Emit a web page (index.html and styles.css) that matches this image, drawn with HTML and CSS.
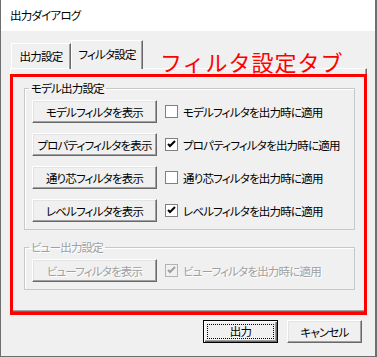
FILE: index.html
```html
<!DOCTYPE html>
<html lang="ja">
<head>
    <meta charset="UTF-8">
    <title>出力ダイアログ</title>
    <link rel="stylesheet" href="styles.css">
</head>
<body>
<div class="window">
    <div class="titlebar">出力ダイアログ</div>

    <div class="client">
        <!-- タブ -->
        <div class="tabrow">
            <div class="tab">出力設定</div>
            <div class="tab active">フィルタ設定</div>
            <div class="note">フィルタ設定タブ</div>
        </div>

        <div class="panel">
            <fieldset class="group">
                <legend>モデル出力設定</legend>
                <div class="row">
                    <button class="btn">モデルフィルタを表示</button>
                    <label class="check"><span class="box"></span>モデルフィルタを出力時に適用</label>
                </div>
                <div class="row">
                    <button class="btn">プロパティフィルタを表示</button>
                    <label class="check"><span class="box"><svg width="11" height="11" viewBox="0 0 11 11"><path d="M2 5 L4 7 L9 2" fill="none" stroke="#000" stroke-width="2"/></svg></span>プロパティフィルタを出力時に適用</label>
                </div>
                <div class="row">
                    <button class="btn">通り芯フィルタを表示</button>
                    <label class="check"><span class="box"></span>通り芯フィルタを出力時に適用</label>
                </div>
                <div class="row">
                    <button class="btn">レベルフィルタを表示</button>
                    <label class="check"><span class="box"><svg width="11" height="11" viewBox="0 0 11 11"><path d="M2 5 L4 7 L9 2" fill="none" stroke="#000" stroke-width="2"/></svg></span>レベルフィルタを出力時に適用</label>
                </div>
            </fieldset>

            <fieldset class="group disabled">
                <legend>ビュー出力設定</legend>
                <div class="row">
                    <button class="btn" disabled>ビューフィルタを表示</button>
                    <label class="check"><span class="box"><svg width="11" height="11" viewBox="0 0 11 11"><path d="M2 5 L4 7 L9 2" fill="none" stroke="#a0a0a0" stroke-width="2"/></svg></span>ビューフィルタを出力時に適用</label>
                </div>
            </fieldset>

            <!-- 注釈の赤枠 -->
            <div class="highlight"></div>
        </div>

        <div class="actions">
            <button class="btn default"><span>出力</span></button>
            <button class="btn">キャンセル</button>
        </div>
    </div>
</div>
</body>
</html>
```

FILE: styles.css
```css
* {
    box-sizing: border-box;
}

html, body {
    margin: 0;
}

body {
    width: 377px;
    height: 357px;
    font-family: "Noto Sans CJK JP", sans-serif;
    font-size: 11.5px;
    font-feature-settings: "palt";
    letter-spacing: -0.8px;
    white-space: nowrap;
    color: #000;
    background: #3c3c3c;
}

.window {
    width: 377px;
    height: 357px;
    border-left: 1px solid #6e6e6e;
    border-right: 2px solid #6e6e6e;
    border-bottom: 1px solid #6e6e6e;
    background: #f0f0f0;
}

.titlebar {
    height: 31px;
    line-height: 31px;
    padding-left: 9px;
    background: #fff;
}

.client {
    padding: 9px 8px 0 9px;
}

/* タブ */
.tabrow {
    display: flex;
    align-items: flex-end;
    height: 29px;
    margin-bottom: -1px;
    position: relative;
    z-index: 1;
}

.tab {
    width: 60px;
    height: 26px;
    margin-left: 1px;
    line-height: 24px;
    text-align: center;
    border: 1px solid;
    border-color: #fff #696969 transparent #fff;
    border-bottom: none;
    box-shadow: inset -1px 0 #a0a0a0;
}

.tab.active {
    width: 72px;
    height: 29px;
    margin-left: 0;
    line-height: 26px;
    background: #f0f0f0;
}

.note {
    margin-left: 17px;
    margin-bottom: -3px;
    font-size: 22px;
    line-height: 22px;
    letter-spacing: 1px;
    font-feature-settings: normal;
    color: #ff0000;
}

.panel {
    position: relative;
    height: 244px;
    padding: 12px 11px 0 13px;
    border: 1px solid;
    border-color: #fff #696969 #696969 #fff;
    box-shadow: inset -1px -1px #a0a0a0;
}

/* グループ */
.group {
    margin: 0;
    padding: 5px 7px 7px 7px;
    border: 1px solid #c8c8c8;
    box-shadow: inset 1px 1px #fff;
}

.group + .group {
    margin-top: 10px;
}

.group legend {
    margin-left: -3px;
    padding: 0 2px;
    line-height: 14px;
}

.row {
    display: flex;
    align-items: center;
    gap: 8px;
}

.row + .row {
    margin-top: 10px;
}

.btn {
    width: 125px;
    height: 23px;
    padding: 0;
    font: inherit;
    letter-spacing: inherit;
    color: #000;
    background: #f0f0f0;
    border: 1px solid;
    border-color: #fff #696969 #696969 #fff;
    box-shadow: inset -1px -1px #a0a0a0, inset 1px 1px #e3e3e3;
}

.check {
    display: flex;
    align-items: center;
    gap: 5px;
}

.box {
    display: flex;
    align-items: center;
    justify-content: center;
    width: 13px;
    height: 13px;
    background: #fff;
    border: 1px solid #808080;
}

.disabled legend,
.disabled .btn,
.disabled .check {
    color: #a0a0a0;
    text-shadow: 1px 1px #fff;
}

.disabled .box {
    background: #f0f0f0;
    border-color: #b4b4b4;
}

/* 注釈 */
.highlight {
    position: absolute;
    left: -1px;
    top: 5px;
    width: 357px;
    height: 241px;
    border: 3px solid #ff0000;
}

.actions {
    display: flex;
    justify-content: flex-end;
    gap: 9px;
    margin-top: 8px;
    padding-right: 5px;
}

.actions .btn {
    width: 75px;
}

.btn.default {
    border: 1px solid #000;
    box-shadow: inset 1px 1px #fff, inset -1px -1px #696969, inset -2px -2px #a0a0a0;
}

.btn.default span {
    display: block;
    height: 15px;
    margin: 0 3px;
    line-height: 13px;
    border: 1px dotted #000;
}
```
